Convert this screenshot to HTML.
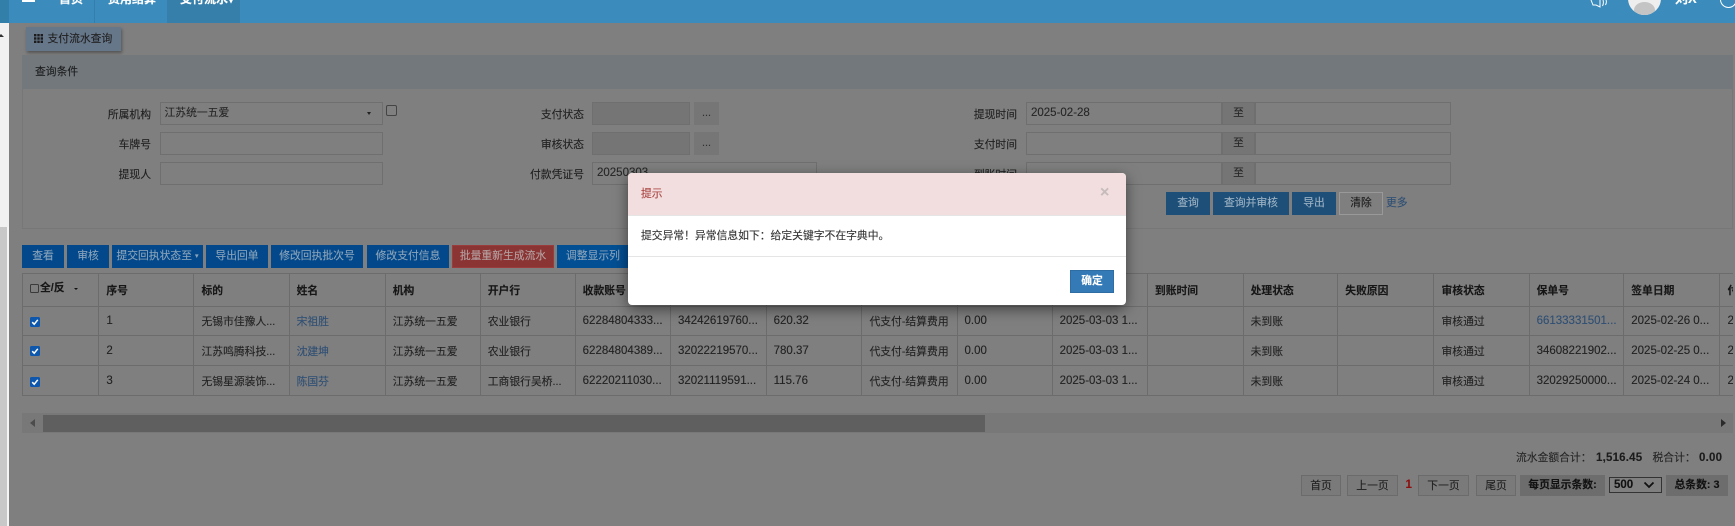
<!DOCTYPE html>
<html lang="zh">
<head>
<meta charset="utf-8">
<title>支付流水查询</title>
<style>
html,body{margin:0;padding:0;width:1735px;height:526px;overflow:hidden;background:#7f7f7f}
body{position:relative;font-family:"Liberation Sans","Noto Sans CJK SC",sans-serif;font-size:10.8px;color:#1f1f1f;-webkit-text-stroke:.12px currentColor}
div,span{box-sizing:border-box}
.a{position:absolute}
.t{position:absolute;white-space:nowrap;height:16px;line-height:16px}
.r{text-align:right}
.in{position:absolute;height:23px;border:1px solid #6f6f6f;background:#7f7f7f;padding-left:4px;line-height:20px;white-space:nowrap;color:#262626}
.g{background:#757575}
.btn{position:absolute;top:245px;height:23px;background:#03488a;color:#8aa3ba;text-align:center;line-height:22px;white-space:nowrap}
.sb{position:absolute;top:192px;height:23px;background:#1d4f78;color:#9fb3c4;text-align:center;line-height:22px}
.pg{position:absolute;top:475px;height:21px;background:#7a7a7a;border:1px solid #6b6b6b;text-align:center;line-height:20px;color:#1f1f1f}
.bx{position:absolute;height:21px;top:475px;background:#6d6d6d;font-weight:bold;color:#111;text-align:center;line-height:20px}
#tw{position:absolute;left:22px;top:273px;width:1711px;height:123px;overflow:hidden}
table{border-collapse:collapse;table-layout:fixed;width:1737.6px;position:absolute;left:0;top:0}
td,th{border:1px solid #6c6c6c;padding:0 0 0 7px;text-align:left;white-space:nowrap;overflow:hidden;font-size:10.8px;font-weight:normal;color:#222}
th{height:32px;font-weight:bold;color:#161616}
td{height:28px}
tr.h2 td{height:29px}
tr.h3 td{height:29px}
.n{font-size:11.5px}
td.l,.l{color:#2f4f74}
.cb{position:absolute;width:9.5px;height:9.5px;left:8px;background:#0d57ad;border-radius:1.5px}
.cb svg{position:absolute;left:0;top:0}
</style>
</head>
<body>
<!-- left strip -->
<div class="a" style="left:0;top:23px;width:9px;height:204px;background:#f1f1f1"></div>
<div class="a" style="left:0;top:227px;width:7px;height:299px;background:#c8c8c8"></div>
<div class="a" style="left:7px;top:227px;width:2px;height:299px;background:#f4f4f4"></div>
<div class="a" style="left:-2px;top:34px;border-left:3px solid transparent;border-right:3px solid transparent;border-bottom:3px solid #333"></div>

<!-- nav -->
<div class="a" style="left:0;top:0;width:1735px;height:23px;background:#3b8cbd"></div>
<div class="a" style="left:0;top:0;width:9px;height:23px;background:#327fa9"></div>
<div class="a" style="left:94px;top:0;width:1px;height:23px;background:#337fab"></div>
<div class="a" style="left:167px;top:0;width:73px;height:23px;background:#367fab"></div>
<div class="a" style="left:22px;top:0;width:13px;height:2px;background:#fff"></div>
<div class="t" style="left:59px;top:-9px;color:#fff;font-size:12px;font-weight:bold">首页</div>
<div class="t" style="left:108px;top:-9px;color:#fff;font-size:12px;font-weight:bold">费用结算</div>
<div class="t" style="left:180px;top:-9px;color:#fff;font-size:12px;font-weight:bold">支付流水▾</div>
<svg class="a" style="left:1590px;top:0" width="20" height="8" viewBox="0 0 20 8"><path d="M1 0 L3 5 L6 5 L10 7 L10 0 M13 0 Q14 3 12.5 6 M16 0 Q17 2 15.5 5" fill="none" stroke="#fff" stroke-width="1"/></svg>
<div class="a" style="left:1628px;top:-18px;width:33px;height:33px;border-radius:50%;background:#eee;overflow:hidden"><div class="a" style="left:6px;top:20px;width:21px;height:16px;border-radius:50%;background:#c4c4c4"></div></div>
<div class="t" style="left:1675px;top:-9px;color:#fff;font-size:13px;font-weight:bold">刘X</div>
<div class="a" style="left:1720px;top:-9px;width:17px;height:17px;border-radius:50%;border:1.5px solid #fff"></div>

<!-- tab -->
<div class="a" style="left:26px;top:27px;width:95px;height:24px;background:#67778a;box-shadow:1px 2px 3px rgba(0,0,0,.35)"></div>
<svg class="a" style="left:34px;top:34px" width="9" height="9" viewBox="0 0 9 9"><g fill="#1c1c1c"><rect width="2.4" height="2.4"/><rect x="3.3" width="2.4" height="2.4"/><rect x="6.6" width="2.4" height="2.4"/><rect y="3.3" width="2.4" height="2.4"/><rect x="3.3" y="3.3" width="2.4" height="2.4"/><rect x="6.6" y="3.3" width="2.4" height="2.4"/><rect y="6.6" width="2.4" height="2.4"/><rect x="3.3" y="6.6" width="2.4" height="2.4"/><rect x="6.6" y="6.6" width="2.4" height="2.4"/></g></svg>
<div class="t" style="left:47.5px;top:30.5px;color:#202020">支付流水查询</div>

<!-- panel -->
<div class="a" style="left:22px;top:55px;width:1711px;height:174px;border:1px solid #777;background:#7f7f7f"></div>
<div class="a" style="left:22px;top:55px;width:1711px;height:34px;background:#72787c"></div>
<div class="t" style="left:35px;top:64px;color:#1c1c1c">查询条件</div>

<!-- form col 1 -->
<div class="t r" style="left:90px;width:61px;top:107px">所属机构</div>
<div class="in" style="left:159.5px;top:102px;width:223px">江苏统一五爱</div>
<div class="a" style="left:366.5px;top:112px;border-left:2.5px solid transparent;border-right:2.5px solid transparent;border-top:3px solid #222"></div>
<div class="a" style="left:386px;top:105px;width:11px;height:11px;border:1px solid #444;border-radius:2px;background:#808080"></div>
<div class="t r" style="left:90px;width:61px;top:137px">车牌号</div>
<div class="in" style="left:159.5px;top:132px;width:223px"></div>
<div class="t r" style="left:90px;width:61px;top:167px">提现人</div>
<div class="in" style="left:159.5px;top:162px;width:223px"></div>

<!-- form col 2 -->
<div class="t r" style="left:520px;width:64px;top:107px">支付状态</div>
<div class="in g" style="left:592px;top:102px;width:98px"></div>
<div class="a" style="left:694px;top:102px;width:25px;height:23px;background:#767676;text-align:center;line-height:23px;color:#333">...</div>
<div class="t r" style="left:520px;width:64px;top:137px">审核状态</div>
<div class="in g" style="left:592px;top:132px;width:98px"></div>
<div class="a" style="left:694px;top:132px;width:25px;height:23px;background:#767676;text-align:center;line-height:23px;color:#333">...</div>
<div class="t r" style="left:520px;width:64px;top:167px">付款凭证号</div>
<div class="in" style="left:592px;top:162px;width:225px"><span class="n">20250303</span></div>

<!-- form col 3 -->
<div class="t r" style="left:950px;width:67px;top:107px">提现时间</div>
<div class="in" style="left:1026px;top:102px;width:196px"><span class="n">2025-02-28</span></div>
<div class="in g" style="left:1222px;top:102px;width:33px;padding:0;text-align:center">至</div>
<div class="in" style="left:1255px;top:102px;width:196px"></div>
<div class="t r" style="left:950px;width:67px;top:137px">支付时间</div>
<div class="in" style="left:1026px;top:132px;width:196px"></div>
<div class="in g" style="left:1222px;top:132px;width:33px;padding:0;text-align:center">至</div>
<div class="in" style="left:1255px;top:132px;width:196px"></div>
<div class="t r" style="left:950px;width:67px;top:167px">到账时间</div>
<div class="in" style="left:1026px;top:162px;width:196px"></div>
<div class="in g" style="left:1222px;top:162px;width:33px;padding:0;text-align:center">至</div>
<div class="in" style="left:1255px;top:162px;width:196px"></div>

<!-- search buttons -->
<div class="sb" style="left:1166px;width:44px">查询</div>
<div class="sb" style="left:1213px;width:76px">查询并审核</div>
<div class="sb" style="left:1292px;width:44px">导出</div>
<div class="sb" style="left:1339px;width:44px;background:#7f7f7f;border:1px solid #999;color:#1c1c1c;line-height:20px">清除</div>
<div class="t l" style="left:1386px;top:195px">更多</div>

<!-- action buttons -->
<div class="btn" style="left:22px;width:42px">查看</div>
<div class="btn" style="left:67px;width:42px">审核</div>
<div class="btn" style="left:112px;width:91px">提交回执状态至 <span style="font-size:7px;vertical-align:1px">▾</span></div>
<div class="btn" style="left:206px;width:62px">导出回单</div>
<div class="btn" style="left:271px;width:92px">修改回执批次号</div>
<div class="btn" style="left:367px;width:82px">修改支付信息</div>
<div class="btn" style="left:452px;width:102px;background:#8a3434;border:1px solid #9a3c3c;color:#b5a0a0;line-height:20px">批量重新生成流水</div>
<div class="btn" style="left:557px;width:72px;background:#034f93">调整显示列</div>

<!-- table -->
<div id="tw">
<table>
<colgroup>
<col style="width:76.4px"><col style="width:95.1px"><col style="width:95.1px"><col style="width:96.2px"><col style="width:95px"><col style="width:94.9px"><col style="width:95.3px"><col style="width:95.7px"><col style="width:95.8px"><col style="width:95.1px"><col style="width:95.1px"><col style="width:95.3px"><col style="width:95.7px"><col style="width:94.7px"><col style="width:96.2px"><col style="width:95.1px"><col style="width:94.7px"><col style="width:96.2px"><col style="width:40px">
</colgroup>
<tr><th></th><th>序号</th><th>标的</th><th>姓名</th><th>机构</th><th>开户行</th><th>收款账号</th><th>身份证号</th><th>金额</th><th>业务类型</th><th>税额</th><th>支付时间</th><th>到账时间</th><th>处理状态</th><th>失败原因</th><th>审核状态</th><th>保单号</th><th>签单日期</th><th>付款</th></tr>
<tr><td></td><td class="n">1</td><td>无锡市佳豫人...</td><td class="l">宋祖胜</td><td>江苏统一五爱</td><td>农业银行</td><td class="n">62284804333...</td><td class="n">34242619760...</td><td class="n">620.32</td><td>代支付-结算费用</td><td class="n">0.00</td><td class="n">2025-03-03 1...</td><td></td><td>未到账</td><td></td><td>审核通过</td><td class="n l">66133331501...</td><td class="n">2025-02-26 0...</td><td class="n">2</td></tr>
<tr class="h2"><td></td><td class="n">2</td><td>江苏鸣腾科技...</td><td class="l">沈建坤</td><td>江苏统一五爱</td><td>农业银行</td><td class="n">62284804389...</td><td class="n">32022219570...</td><td class="n">780.37</td><td>代支付-结算费用</td><td class="n">0.00</td><td class="n">2025-03-03 1...</td><td></td><td>未到账</td><td></td><td>审核通过</td><td class="n">34608221902...</td><td class="n">2025-02-25 0...</td><td class="n">2</td></tr>
<tr class="h3"><td></td><td class="n">3</td><td>无锡星源装饰...</td><td class="l">陈国芬</td><td>江苏统一五爱</td><td>工商银行吴桥...</td><td class="n">62220211030...</td><td class="n">32021119591...</td><td class="n">115.76</td><td>代支付-结算费用</td><td class="n">0.00</td><td class="n">2025-03-03 1...</td><td></td><td>未到账</td><td></td><td>审核通过</td><td class="n">32029250000...</td><td class="n">2025-02-24 0...</td><td class="n">2</td></tr>
</table>
<div class="a" style="left:8px;top:10.5px;width:9px;height:9px;border:1px solid #3a3a3a;border-radius:1.5px"></div>
<div class="t" style="left:18px;top:7px;font-weight:bold;color:#161616">全/反</div>
<div class="a" style="left:51.5px;top:15px;border-left:2px solid transparent;border-right:2px solid transparent;border-top:2px solid #111"></div>
<div class="cb" style="top:44px"><svg width="10" height="10" viewBox="0 0 10 10"><path d="M2.2 5.2 L4.2 7.2 L7.8 2.8" fill="none" stroke="#fff" stroke-width="1.5"/></svg></div>
<div class="cb" style="top:73px"><svg width="10" height="10" viewBox="0 0 10 10"><path d="M2.2 5.2 L4.2 7.2 L7.8 2.8" fill="none" stroke="#fff" stroke-width="1.5"/></svg></div>
<div class="cb" style="top:104px"><svg width="10" height="10" viewBox="0 0 10 10"><path d="M2.2 5.2 L4.2 7.2 L7.8 2.8" fill="none" stroke="#fff" stroke-width="1.5"/></svg></div>
</div>

<!-- scrollbar -->
<div class="a" style="left:22px;top:413px;width:1711px;height:20px;background:#787878"></div>
<div class="a" style="left:43px;top:415px;width:942px;height:17px;background:#5f5f5f"></div>
<div class="a" style="left:29.5px;top:419px;border-top:4.5px solid transparent;border-bottom:4.5px solid transparent;border-right:5px solid #4c4c4c"></div>
<div class="a" style="left:1720.5px;top:419px;border-top:4.5px solid transparent;border-bottom:4.5px solid transparent;border-left:5px solid #2a2a2a"></div>

<!-- totals -->
<div class="t" style="left:1516px;top:450px;color:#262626">流水金额合计：</div>
<div class="t" style="left:1596px;top:450px;font-weight:bold;font-size:11.5px;letter-spacing:.2px;color:#1c1c1c">1,516.45</div>
<div class="t" style="left:1652.5px;top:450px;color:#262626">税合计：</div>
<div class="t" style="left:1699px;top:450px;font-weight:bold;font-size:11.5px;letter-spacing:.2px;color:#1c1c1c">0.00</div>

<!-- pager -->
<div class="pg" style="left:1301px;width:40px">首页</div>
<div class="pg" style="left:1347px;width:51px">上一页</div>
<div class="t" style="left:1405.5px;top:477px;font-weight:bold;color:#8c0f0f;font-size:11.5px">1</div>
<div class="pg" style="left:1418px;width:51px">下一页</div>
<div class="pg" style="left:1476px;width:40px">尾页</div>
<div class="bx" style="left:1520px;width:85px">每页显示条数:</div>
<div class="a" style="left:1609px;top:477px;width:53px;height:16px;border:1px solid #333;font-weight:bold;color:#111;line-height:14px;padding-left:4px;font-size:11.5px">500</div>
<svg class="a" style="left:1643px;top:481px" width="12" height="8" viewBox="0 0 12 8"><path d="M1.5 1.5 L6 6 L10.5 1.5" fill="none" stroke="#111" stroke-width="1.8"/></svg>
<div class="bx" style="left:1666px;width:62px">总条数: 3</div>

<!-- modal -->
<div class="a" style="left:628px;top:173px;width:498px;height:132px;background:#fff;border-radius:4px;box-shadow:0 4px 14px rgba(0,0,0,.5);overflow:hidden">
  <div class="a" style="left:0;top:0;width:498px;height:43px;background:#f2dede;border-bottom:1px solid #e5e5e5"></div>
  <div class="a" style="left:0;top:83px;width:498px;height:1px;background:#e5e5e5"></div>
  <div class="t" style="left:13px;top:13px;color:#a94442">提示</div>
  <div class="t" style="left:472px;top:12px;font-size:16px;color:#c6bcbc;font-weight:bold">×</div>
  <div class="t" style="left:13px;top:54.5px;color:#333">提交异常！异常信息如下：给定关键字不在字典中。</div>
  <div class="a" style="left:442px;top:97px;width:44px;height:23px;background:#337ab7;border:1px solid #2e6da4;color:#fff;text-align:center;line-height:21px;font-weight:bold">确定</div>
</div>
</body>
</html>
